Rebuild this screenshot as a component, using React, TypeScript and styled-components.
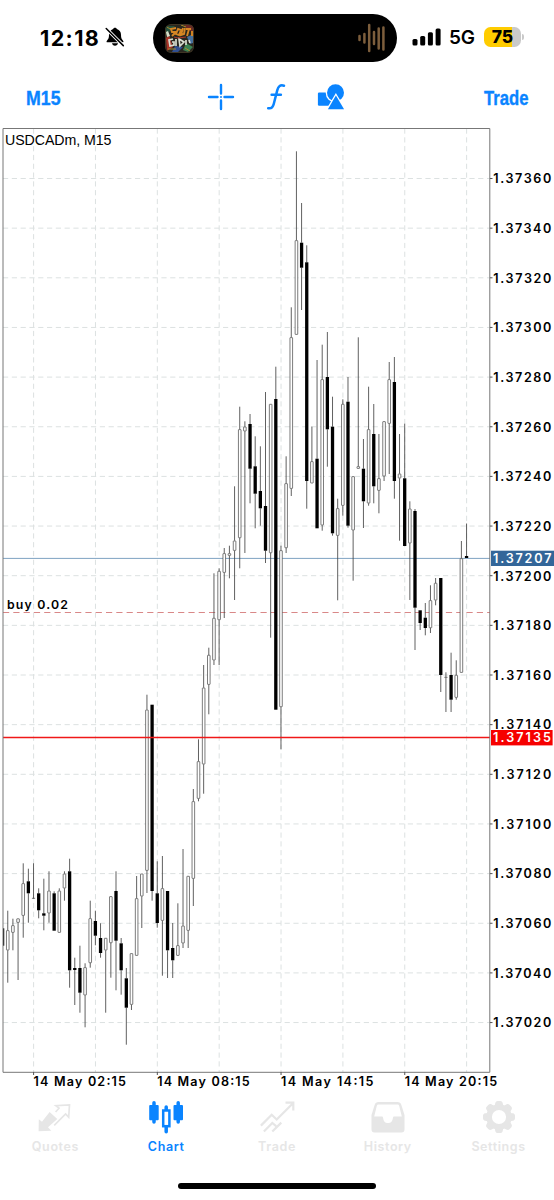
import React from "react";
import styled, { createGlobalStyle } from "styled-components";

const BLUE = "#0a84ff";
const MUTED = "#e6e6e6";

const GlobalStyle = createGlobalStyle`
  * { box-sizing: border-box; }
  body { margin: 0; background: #fff; font-family: Inter, "Liberation Sans", sans-serif; }
`;

const Screen = styled.div`
  width: 554px;
  height: 1200px;
  display: flex;
  flex-direction: column;
  background: #fff;
  overflow: hidden;
`;

const StatusBar = styled.header`
  height: 76px;
  display: flex;
  align-items: flex-start;
`;

const Clock = styled.div`
  width: 152.5px;
  padding: 24px 0 0 40px;
  display: flex;
  gap: 5px;
  font-size: 21.5px;
  line-height: 28px;
  font-weight: 700;
  letter-spacing: 1.4px;
  svg { margin-top: 3px; flex: none; }
`;

const Island = styled.div`
  width: 244.5px;
  height: 48px;
  margin-top: 14px;
  padding: 0 12px;
  border-radius: 24px;
  background: #000;
  display: flex;
  align-items: center;
  justify-content: space-between;
`;

const Signals = styled.div`
  display: flex;
  align-items: center;
  height: 30px;
  margin: 22px 0 0 15px;
`;

const Network = styled.span`
  width: 27px;
  margin: 1px 8px 0 8px;
  font-size: 19px;
  font-weight: 600;
  letter-spacing: -0.3px;
`;

const Battery = styled.div`
  width: 37px;
  height: 20px;
  border-radius: 6.5px;
  background: linear-gradient(90deg, #ffcc00 0 28px, #c9c9c9 28px);
  font-size: 17.5px;
  line-height: 20px;
  font-weight: 800;
  text-align: center;
`;

const BatteryTip = styled.i`
  width: 2px;
  height: 6px;
  margin-left: 1px;
  border-radius: 0 2px 2px 0;
  background: #c9c9c9;
`;

const Toolbar = styled.nav`
  height: 44px;
  padding: 0 26px;
  display: flex;
  align-items: center;
  justify-content: space-between;
  color: ${BLUE};
`;

const ToolLabel = styled.button<{ $w: number }>`
  width: ${(p) => p.$w}px;
  padding: 0;
  border: 0;
  background: none;
  display: flex;
  svg { overflow: visible; }
`;

const Tools = styled.div`
  display: flex;
  align-items: center;
  gap: 28px;
  margin: -2px -8px 0 0;
  svg { display: block; }
`;

const ChartArea = styled.main`
  height: 975px;
  svg { display: block; }
`;

const TabBar = styled.nav`
  height: 70px;
  display: flex;
`;

const Tab = styled.button<{ $active?: boolean }>`
  flex: 1;
  padding: 4px 0 0;
  border: 0;
  background: none;
  display: flex;
  flex-direction: column;
  align-items: center;
  color: ${(p) => (p.$active ? BLUE : MUTED)};
  font: 600 12.5px/16px Inter, sans-serif;
  letter-spacing: 0.6px;
  svg { width: 36px; height: 36px; margin-bottom: 4px; overflow: visible; }
`;

const HomeIndicator = styled.div`
  width: 198px;
  height: 6px;
  margin: 18px auto 0;
  border-radius: 3px;
  background: #000;
`;

type Candle = [high: number, top: number, bottom: number, low: number, filled: 0 | 1];

/* Vertical positions of every bar: high, body top, body bottom, low, bearish flag. */
const candles: Candle[] = [
  [928.3, 928.3, 945.7, 945.7, 1], [910.7, 930.3, 950.3, 982.7, 0], [918.7, 925.3, 932.7, 950.3, 0],
  [918.5, 918.5, 922.7, 980, 0], [863.3, 883.3, 915.7, 937.7, 0], [868.7, 881.3, 893.3, 922.7, 1],
  [863.3, 898.3, 898.3, 898.7, 0], [888.3, 893.3, 910.3, 918.3, 1], [878.7, 913.3, 915.7, 930.3, 1],
  [871.3, 890.7, 913.3, 922.7, 0], [891.3, 893.3, 930.7, 930.7, 1], [888.3, 890.7, 932.7, 932.7, 0],
  [871.3, 873.7, 888.3, 900.7, 0], [858.7, 871.3, 970.3, 987.7, 1], [957.7, 968, 970, 1005, 1],
  [945.7, 968, 992.7, 1012.7, 1], [963.3, 967.3, 995.3, 1027.3, 0], [900.7, 918.3, 963, 967.7, 0],
  [910.7, 921, 935.7, 945.3, 1], [923.3, 938, 953, 957.7, 1], [938, 938, 950.3, 1012.7, 0],
  [896.3, 896.3, 943, 977.7, 0], [871.3, 891, 940.7, 990.3, 1], [938, 943.3, 970.3, 994.7, 1],
  [968, 978.3, 1007.7, 1044.7, 1], [953.3, 953.3, 1004.7, 1010, 0], [876, 898.3, 955.7, 955.7, 0],
  [873.7, 873.7, 896.3, 928, 0], [694.7, 709.7, 870.7, 893, 0], [704.7, 704.7, 891, 900.7, 1],
  [861.3, 893.3, 923, 927.7, 1], [856, 888.3, 920.7, 975.7, 0], [891, 891, 950.3, 978, 1],
  [923, 948, 960.3, 978, 1], [903.3, 945.3, 955.7, 955.7, 0], [849, 925.7, 943.3, 948, 0],
  [876, 876, 930.7, 948, 0], [789, 801.3, 878.7, 906, 0], [739.3, 761.3, 798.7, 801.3, 0],
  [665, 687.7, 764.3, 793.7, 0], [647.7, 655, 684.7, 714.3, 0], [573.3, 618, 660.3, 665, 0],
  [568.3, 571, 620, 665, 0], [548, 553.3, 572.7, 618, 0], [545.7, 553.3, 555.7, 578.3, 0],
  [486.3, 540.7, 550.7, 600, 0], [406.7, 429.3, 538, 568.3, 0], [421.3, 426.7, 431.3, 553, 0],
  [414, 424, 468.7, 503.3, 1], [436.3, 466.3, 493.7, 528.3, 1], [446.3, 491, 508.3, 525.7, 1],
  [392, 506, 550.7, 563, 1], [404, 404, 553, 637.7, 0], [366.7, 399, 709.7, 709.7, 1],
  [545.7, 550.3, 707, 749.3, 0], [456.3, 483.3, 548, 553, 0], [307.3, 337.3, 488.7, 496, 0],
  [151.3, 240.3, 334.7, 334.7, 0], [203, 242.7, 267.7, 310, 1], [245.3, 262.3, 481, 508.7, 1],
  [426.7, 461.3, 483.3, 483.3, 0], [360, 458.7, 528.3, 528.3, 1], [344.7, 379.3, 525.3, 530.7, 0],
  [332, 377, 429.3, 466.7, 1], [396.7, 426.7, 533.3, 535.7, 1], [498.7, 508.3, 535.7, 600.3, 0],
  [399.3, 404, 505.7, 515.7, 0], [377, 401.7, 525.7, 527.7, 1], [476.3, 476.3, 530.3, 580.7, 0],
  [337.3, 466.3, 468.7, 468.7, 0], [439, 468.7, 501.3, 528, 1], [386.7, 429.3, 503.3, 505.7, 0],
  [404, 434, 486.3, 503.3, 1], [434, 478.3, 490.7, 513.3, 0], [421.3, 421.3, 476.3, 481, 0],
  [362, 379.3, 423.7, 474, 0], [357, 382, 481, 498.7, 1], [434, 473.7, 478.3, 540.7, 0],
  [423.7, 478.3, 546, 546, 1], [501.3, 508.7, 543.3, 600, 0], [509, 511, 607.7, 650, 1],
  [610.3, 610.3, 623, 630, 1], [603, 617.7, 628, 635.3, 1], [585.3, 600.3, 628, 633, 0],
  [578, 583, 600.3, 605.3, 0], [578, 578, 675, 692, 1], [672.3, 677.3, 677.3, 712, 0],
  [652.7, 675, 699.7, 712, 1], [660.3, 675, 697.7, 699.7, 0], [541, 558.3, 672.7, 672.7, 0],
  [523.5, 556, 558, 558, 1],
];

const STEP = 5.155;
const prices = Array.from({ length: 18 }, (_, i) => ({
  label: (1.3736 - i * 0.0002).toFixed(5),
  y: 178.5 + i * 49.65,
}));
const times = Array.from({ length: 8 }, (_, i) => 33.6 + i * 61.86);
const timeLabels = ["14 May 02:15", "14 May 08:15", "14 May 14:15", "14 May 20:15"];

function CandleBar({ c, x }: { c: Candle; x: number }) {
  const [high, top, bottom, low, filled] = c;
  const doji = bottom - top < 0.5;
  return (
    <g>
      <path d={`M${x} ${high}V${top}M${x} ${bottom}V${low}`} stroke="#444" strokeWidth=".85" />
      {doji ? (
        <path d={`M${x - 1.6} ${top}h3.2`} stroke="#555" strokeWidth=".8" />
      ) : filled ? (
        <rect x={x - 1.65} y={top} width="3.3" height={bottom - top} fill="#000" />
      ) : (
        <rect x={x - 1.3} y={top + 0.3} width="2.6" height={Math.max(bottom - top - 0.6, 1)} rx=".3" fill="#fff" stroke="#444" strokeWidth=".7" />
      )}
    </g>
  );
}

function PriceChart() {
  return (
    <svg width="554" height="975" viewBox="0 120 554 975" fontFamily="Inter, sans-serif">
      <defs>
        <clipPath id="plot"><rect x="3" y="128" width="487" height="944" /></clipPath>
      </defs>
      <g stroke="#dce1e1" strokeWidth="1" strokeDasharray="5.2 3.6">
        {prices.map((p) => <path key={p.label} d={`M3 ${p.y}H490`} />)}
        {times.map((x) => <path key={x} d={`M${x} 128.5V1072`} />)}
      </g>
      <path d="M3 558.4H490" stroke="#7fa3c2" strokeWidth="1" />
      <path d="M3 612.5H490" stroke="#d98888" strokeWidth="1" strokeDasharray="6.2 4.1" />
      <g clipPath="url(#plot)">
        {candles.map((c, i) => <CandleBar key={i} c={c} x={2.6 + i * STEP} />)}
      </g>
      <path d="M3 737.5H490" stroke="#f01818" strokeWidth="1.5" />
      <path d="M3 128.5H489.8V1072.3H3Z" fill="none" stroke="#777" strokeWidth="1" />
      <text x="5" y="144.8" fontSize="14.2" fontFamily="'Liberation Sans', sans-serif" textLength="106.5">USDCADm, M15</text>
      <text x="7" y="609.2" fontSize="12.3" fontWeight="600" textLength="61">buy 0.02</text>
      {prices.map((p) => (
        <g key={p.label}>
          <path d={`M490 ${p.y}h2.5`} stroke="#555" />
          <text x="493.3" y={p.y + 4.8} fontSize="12.6" fontWeight="600" textLength="58">{p.label}</text>
        </g>
      ))}
      <rect x="491" y="550.7" width="63" height="15.3" fill="#336699" />
      <text x="493" y="563" fontSize="12.6" fontWeight="600" fill="#fff" textLength="58.4">1.37207</text>
      <rect x="491" y="730" width="61.6" height="15.4" fill="#f60000" />
      <text x="493" y="742.3" fontSize="12.6" fontWeight="600" fill="#fff" textLength="58">1.37135</text>
      {timeLabels.map((label, i) => (
        <g key={label}>
          <path d={`M${times[i * 2]} 1072v3`} stroke="#555" />
          <text x={times[i * 2] - 0.1} y="1086.4" fontSize="12.6" fontWeight="600" textLength="92.5">{label}</text>
        </g>
      ))}
    </svg>
  );
}

const MutedBell = () => (
  <svg width="20" height="20" viewBox="0 0 20 20">
    <path d="M10 .7c-1 0-1.700.6-1.900 1.400C5.400 3 4 5 4 7.800c0 3.400-.7 4.500-2.100 5.900-.5.500-.6 1.600.5 1.600h15.200c1.100 0 1-1.100.5-1.600C16.700 12.300 16 11.200 16 7.800c0-2.800-1.400-4.800-4.100-5.700C11.700 1.300 11 .7 10 .7ZM7 16.300c.3 1.500 1.400 2.500 3 2.500s2.700-1 3-2.500Z" fill="#000" />
    <path d="M1.300 1.600 18.100 18.400" stroke="#fff" strokeWidth="3.400" />
    <path d="M1.200 1.500 18.300 18.600" stroke="#000" strokeWidth="1.500" strokeLinecap="round" />
  </svg>
);

const AlbumCover = () => (
  <svg width="29" height="29" viewBox="0 0 29 29">
    <defs><clipPath id="cover"><rect width="29" height="29" rx="6" /></clipPath></defs>
    <g clipPath="url(#cover)">
      <rect width="29" height="29" fill="#29271f" />
      <path d="M0 2h10L5 7 0 12Z" fill="#23513d" />
      <path d="M19 1h10v8l-7-4Z" fill="#6d2925" />
      <path d="M1 14 4 11l4 12-6 4Z" fill="#a83428" />
      <path d="m10 22 8 1-5 5H7Z" fill="#304f91" />
      <path d="m21 19 7 4-5 5-5-2Z" fill="#3c8352" />
      <path d="m22 13 6-3v9l-3 1Z" fill="#456f9c" />
      <path d="m1 8 2-1 2 5-3 1Z" fill="#d6dfc9" />
      <path d="m11 4-5 1 1 3 4 0-4 4M13 5l-2 5 3 1 2-5ZM18 4l-2 7 3-1 1-6M21 5h5M24 5l-2 7M27 7v5" fill="none" stroke="#d78623" strokeWidth="1.900" />
      <path d="m8 15-4 1 1 6 4-1v-3H7M11 15v7M14 15l1 7 4-4ZM21 16v5M24 16l1 3" fill="none" stroke="#d9ded0" strokeWidth="1.700" />
      <path d="M3 25h8M20 24l5 3M2 3l3 2M16 1l5 2" stroke="#a88b2e" strokeWidth="1" />
      <path d="m9 13 4 1 8-1" stroke="#ac382b" fill="none" />
      <rect x=".5" y=".5" width="28" height="28" rx="5.500" fill="none" stroke="#3f3524" />
    </g>
  </svg>
);

const Waveform = () => (
  <svg width="27" height="30" viewBox="0 0 27 30">
    <path d="M1.500 13v4M6.400 11v8.500M11.200 2v26M16 9v12M20.700 5.500v20M25.400 4.500v22" stroke="#7d5e3c" strokeWidth="2.500" strokeLinecap="round" />
  </svg>
);

const SignalBars = () => (
  <svg width="29" height="18" viewBox="0 0 29 18">
    <rect x=".5" y="11" width="5" height="6.500" rx="1.500" />
    <rect x="8.200" y="8" width="5" height="9.500" rx="1.500" />
    <rect x="15.900" y="4.300" width="5" height="13.200" rx="1.500" />
    <rect x="23.600" y=".500" width="5" height="17" rx="1.500" />
  </svg>
);

const Crosshair = () => (
  <svg width="28" height="28" viewBox="0 0 28 28" fill="none" stroke={BLUE} strokeWidth="2.400" strokeLinecap="round">
    <path d="M14 2v8.500M14 17.500v8.500M2 14h8.500M17.500 14h8.500" /><circle cx="14" cy="14" r="1" fill={BLUE} stroke="none" />
  </svg>
);

const FunctionIcon = () => (
  <svg width="26" height="28" viewBox="0 0 26 28" fill="none" stroke={BLUE} strokeWidth="2.500" strokeLinecap="round" strokeLinejoin="round">
    <path d="M21 2.700c-3.700-1.200-5.700.5-6.700 4.400l-3.500 13.600c-.8 3.500-2.300 5.100-5.600 4.500M8.600 11.700h9.300" />
  </svg>
);

const ShapesIcon = () => (
  <svg width="28" height="28" viewBox="0 0 28 28">
    <rect x=".9" y="9.500" width="14" height="13.300" rx="1.200" fill={BLUE} />
    <circle cx="18.500" cy="9.800" r="9.800" fill="#fff" />
    <circle cx="18.500" cy="9.800" r="8.500" fill={BLUE} />
    <path d="M18.900 12.600 27.100 26.300H10.900Z" fill={BLUE} stroke="#fff" strokeWidth="2.600" paintOrder="stroke" strokeLinejoin="miter" />
  </svg>
);

const QuotesIcon = () => (
  <svg viewBox="0 0 36 36">
    <path d="m18.600 13 3.400-3.800-3.200-2.500 13.700-.9-.8 12.400-3.100-3.200L17.200 26.400" fill="none" stroke={MUTED} strokeWidth="1.700" />
    <path d="m1.800 20.300 3.200 2.400L12.600 13l7.700 7-9.300 8.300 3.300 3.400-12.700.6Z" fill={MUTED} />
  </svg>
);

const ChartIcon = () => (
  <svg viewBox="0 0 36 36" stroke={BLUE} fill={BLUE}>
    <path d="M6 3.700v19.300M30.200 3.700v19.300M18.200 8v4M18.200 28v4.700" strokeWidth="3.500" strokeLinecap="round" />
    <rect x="1.200" y="6" width="9.500" height="15.200" rx="1" stroke="none" />
    <rect x="25.500" y="6" width="9.500" height="15.200" rx="1" stroke="none" />
    <rect x="15.200" y="11.500" width="6.200" height="15.700" fill="#fff" strokeWidth="2.500" />
  </svg>
);

const TradeIcon = () => (
  <svg viewBox="0 0 36 36" fill="none" stroke={MUTED} strokeWidth="2.200">
    <path d="M1.900 26.600 12.700 15.800l5 4.700L34 4.200M26.500 3.700h7.800v7.800" />
    <path d="m4.900 32.500 8.400-8.600 3.800 3.200M13.300 32.500l9-8.900" />
  </svg>
);

const HistoryIcon = () => (
  <svg viewBox="0 0 36 36">
    <path fill={MUTED} fillRule="evenodd" d="M8.500 3h19c2 0 3.200 1 3.800 2.800L34.500 16v14.500c0 2-1 3-3 3h-27c-2 0-3-1-3-3V16L4.700 5.800C5.300 4 6.500 3 8.500 3Zm0 2.600C7.400 5.600 7 6.200 6.700 7.300L4.200 17.500h7.500c.8 0 1.200.5 1.400 1.400.6 3.800 2.200 5.100 4.900 5.100s4.300-1.300 4.900-5.100c.2-.9.6-1.400 1.400-1.400h7.500L29.300 7.300c-.3-1.100-.7-1.700-1.800-1.700Z" />
  </svg>
);

const SettingsIcon = () => (
  <svg viewBox="0 0 36 36">
    <g fill={MUTED}>
      {[0, 45, 90, 135, 180, 225, 270, 315].map((a) => (
        <path key={a} transform={`rotate(${a} 18 18)`} d="M12.400 8c1.500-1 1.500-2.300 1.900-3.900.4-1.300 1.100-2.100 2.500-2.100h2.400c1.400 0 2.100.8 2.500 2.100.4 1.600.4 2.900 1.900 3.900Z" />
      ))}
    </g>
    <circle cx="18" cy="18" r="9.900" fill="none" stroke={MUTED} strokeWidth="5.600" />
  </svg>
);

const tabs = [
  { label: "Quotes", icon: <QuotesIcon /> },
  { label: "Chart", icon: <ChartIcon />, active: true },
  { label: "Trade", icon: <TradeIcon /> },
  { label: "History", icon: <HistoryIcon /> },
  { label: "Settings", icon: <SettingsIcon /> },
];

function TextTool({ label, width }: { label: string; width: number }) {
  return (
    <ToolLabel $w={width}>
      <svg width={width} height="28">
        <text x="0" y="21" fill={BLUE} stroke={BLUE} strokeWidth=".35" fontFamily="'Liberation Sans Narrow', 'Liberation Sans', sans-serif" fontSize="20" fontWeight="700" textLength={width} lengthAdjust="spacingAndGlyphs">{label}</text>
      </svg>
    </ToolLabel>
  );
}

export default function App() {
  return (
    <Screen>
      <GlobalStyle />
      <StatusBar>
        <Clock>12:18<MutedBell /></Clock>
        <Island><AlbumCover /><Waveform /></Island>
        <Signals>
          <SignalBars />
          <Network>5G</Network>
          <Battery>75</Battery>
          <BatteryTip />
        </Signals>
      </StatusBar>
      <Toolbar>
        <TextTool label="M15" width={34.5} />
        <Tools><Crosshair /><FunctionIcon /><ShapesIcon /></Tools>
        <TextTool label="Trade" width={44.5} />
      </Toolbar>
      <ChartArea><PriceChart /></ChartArea>
      <TabBar>
        {tabs.map((t) => <Tab key={t.label} $active={t.active}>{t.icon}{t.label}</Tab>)}
      </TabBar>
      <HomeIndicator />
    </Screen>
  );
}
